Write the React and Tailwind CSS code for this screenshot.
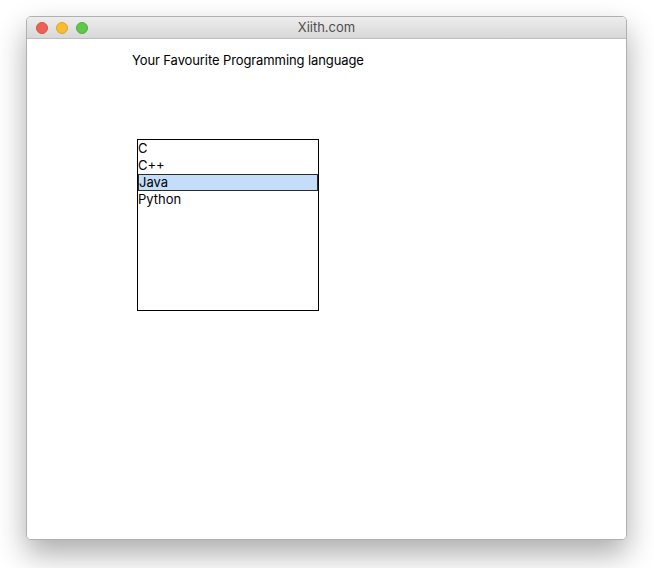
const items = ['C', 'C++', 'Java', 'Python']

function TrafficLights() {
  return (
    <div className="flex items-center gap-[8px] pl-[9px]">
      <span className="w-[12px] h-[12px] rounded-full bg-[#ed5f57] border border-[#d84f47]" />
      <span className="w-[12px] h-[12px] rounded-full bg-[#f5bd31] border border-[#dea52a]" />
      <span className="w-[12px] h-[12px] rounded-full bg-[#5fc84a] border border-[#4eaf3a]" />
    </div>
  )
}

export default function App() {
  return (
    <div
      className="w-[654px] h-[568px] bg-white pt-[16px] pl-[26px]"
      style={{ fontFamily: 'Inter, "Liberation Sans", Arial, sans-serif' }}
    >
      <div className="w-[601px] rounded-[5px] border border-[#b0b0b0] bg-white overflow-hidden shadow-[0_14px_30px_rgba(0,0,0,0.33)]">
        <div className="relative h-[22px] flex items-center bg-gradient-to-b from-[#ededed] to-[#d8d8d8] border-b border-[#bdbdbd]">
          <TrafficLights />
          <div className="absolute inset-0 flex items-center justify-center text-[13px] text-[#4d4d4d]">
            Xiith.com
          </div>
        </div>
        <div className="h-[500px] bg-white pt-[13px] pl-[105px]">
          <div className="text-[13px] leading-[16px] tracking-[-0.1px] text-black">Your Favourite Programming language</div>
          <div className="mt-[71px] ml-[5px] w-[182px] h-[172px] border border-black bg-white">
            {items.map((item) => (
              <div
                key={item}
                className={
                  item === 'Java'
                    ? 'h-[17px] leading-[15px] text-[13px] text-black bg-[#c4ddf8] border border-[#2b2b2b]'
                    : 'h-[17px] leading-[17px] text-[13px] text-black'
                }
              >
                {item}
              </div>
            ))}
          </div>
        </div>
      </div>
    </div>
  )
}
